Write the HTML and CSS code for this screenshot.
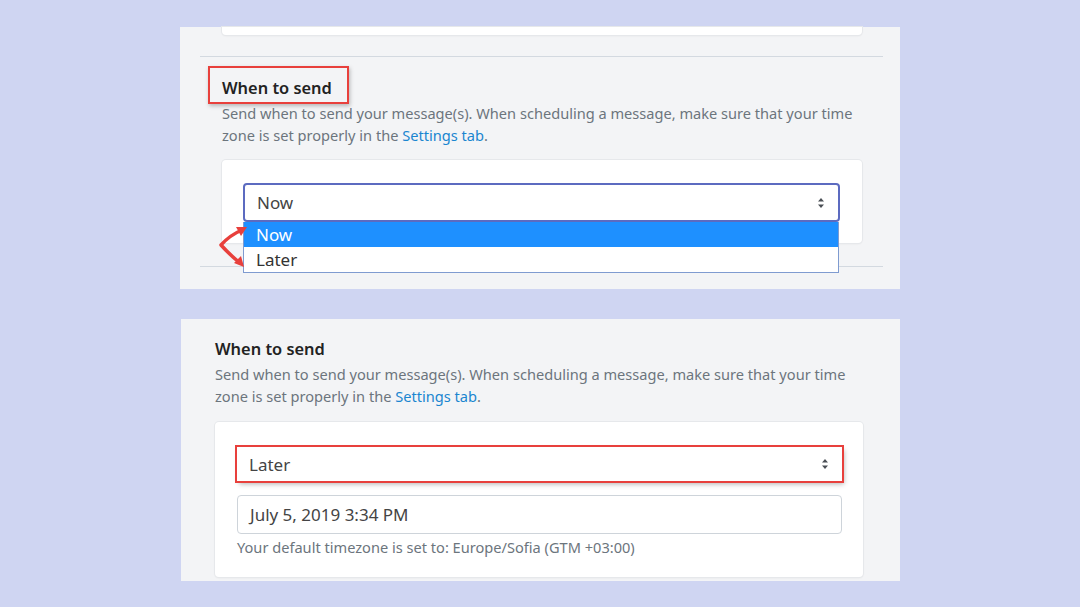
FILE: index.html
```html
<!DOCTYPE html>
<html lang="en">
<head>
  <meta charset="UTF-8">
  <title>When to send</title>
  <link rel="stylesheet" href="styles.css">
</head>
<body>
  <div class="panel first">
    <div class="card stub"></div>
    <hr class="rule">
    <div class="section">
      <h3 class="title"><span class="marked">When to send</span></h3>
      <p class="desc">Send when to send your message(s). When scheduling a message, make sure that your time zone is set properly in the <a href="#">Settings tab</a>.</p>
      <div class="card">
        <div class="select focused">
          <span>Now</span>
          <svg class="updown" width="8" height="12" viewBox="0 0 8 12"><path d="M4 1 L7 4.5 H1 Z M4 11 L7 7.5 H1 Z" fill="#4a4f55"/></svg>
          <ul class="dropdown">
            <li class="active">Now</li>
            <li>Later</li>
          </ul>
        </div>
      </div>
    </div>
    <hr class="rule bottom">
    <svg class="arrow" width="40" height="46" viewBox="0 0 40 46">
      <path d="M26 5 Q14 10 5 20 Q14 30 24 38" fill="none" stroke="#e8403c" stroke-width="3.5" stroke-linejoin="round"/>
      <path d="M31 2 L20 2 L25 11 Z" fill="#e8403c"/>
      <path d="M28 42 L25 31 L18 38 Z" fill="#e8403c"/>
    </svg>
  </div>

  <div class="panel second">
    <div class="section">
      <h3 class="title">When to send</h3>
      <p class="desc">Send when to send your message(s). When scheduling a message, make sure that your time zone is set properly in the <a href="#">Settings tab</a>.</p>
      <div class="card tall">
        <div class="select boxed">
          <span>Later</span>
          <svg class="updown" width="8" height="12" viewBox="0 0 8 12"><path d="M4 1 L7 4.5 H1 Z M4 11 L7 7.5 H1 Z" fill="#4a4f55"/></svg>
        </div>
        <div class="input">July 5, 2019 3:34 PM</div>
        <div class="help">Your default timezone is set to: Europe/Sofia (GTM +03:00)</div>
      </div>
    </div>
  </div>
</body>
</html>
```

FILE: styles.css
```css
body {
  margin: 0;
  background: #cfd5f2;
  font-family: 'Noto Sans', 'Open Sans', sans-serif;
  color: #222;
  height: 607px;
  overflow: hidden;
}
.panel {
  position: relative;
  width: 720px;
  height: 262px;
  margin-left: 180px;
  background: #f3f4f6;
}
.first { margin-top: 27px; }
.second {
  margin-top: 30px;
  margin-left: 181px;
  width: 719px;
}
.card {
  background: #fff;
  border-radius: 4px;
  box-shadow: 0 0 0 1px #e6e8eb, 0 1px 2px rgba(0,0,0,0.08);
}
.stub {
  height: 8px;
  margin: 0 38px 0 42px;
  border-radius: 0 0 4px 4px;
}
.rule {
  border: none;
  border-top: 1px solid #d3d9e0;
  margin: 21px 17px 0 20px;
}
.rule.bottom { margin-top: 23px; }
.section { padding: 19px 38px 0 42px; }
.second .section { padding: 18px 37px 0 34px; }
.title {
  margin: 0;
  font-size: 16.4px;
  font-weight: 600;
  line-height: 24px;
}
.marked { position: relative; }
.marked::after {
  content: "";
  position: absolute;
  left: -14px;
  right: -17px;
  top: -10px;
  bottom: -5px;
  border: 2px solid #e8403c;
  box-shadow: 1px 2px 4px rgba(0,0,0,0.25);
}
.desc {
  margin: 2px 0 0;
  font-size: 14.6px;
  line-height: 22px;
  color: #6c757d;
}
.desc a {
  color: #1a86d0;
  text-decoration: none;
}
.first .card:not(.stub) {
  margin-top: 14px;
  padding: 23px 22px 21px 21px;
}
.tall {
  margin-top: 15px;
  padding: 25px 21px 19px 22px;
}
.select {
  position: relative;
  display: flex;
  align-items: center;
  justify-content: space-between;
  height: 39px;
  padding: 0 13px 0 12px;
  box-sizing: border-box;
  border: 1px solid #ced4da;
  border-radius: 4px;
  background: #fff;
  font-size: 17px;
  color: #444;
}
.select.focused { border: 2px solid #5c6bc0; }
.select.boxed {
  height: 34px;
  border: none;
  outline: 2px solid #e8403c;
  box-shadow: 2px 3px 5px rgba(0,0,0,0.3);
  border-radius: 0;
}
.dropdown {
  position: absolute;
  left: -2px;
  right: -1px;
  top: 37px;
  margin: 0;
  padding: 0;
  list-style: none;
  background: #fff;
  border: 1px solid #7f9bd0;
  border-top: none;
  z-index: 2;
}
.dropdown li {
  height: 25px;
  line-height: 26px;
  padding-left: 12px;
  font-size: 17px;
  color: #333;
}
.dropdown li.active {
  background: #1e90ff;
  color: #fff;
}
.input {
  margin-top: 14px;
  height: 39px;
  box-sizing: border-box;
  padding: 0 12px;
  line-height: 38px;
  border: 1px solid #ced4da;
  border-radius: 4px;
  font-size: 17px;
  color: #444;
}
.help {
  margin-top: 2px;
  font-size: 14.6px;
  line-height: 22px;
  color: #6c757d;
}
.arrow {
  position: absolute;
  left: 36px;
  top: 198px;
  z-index: 3;
}
```
